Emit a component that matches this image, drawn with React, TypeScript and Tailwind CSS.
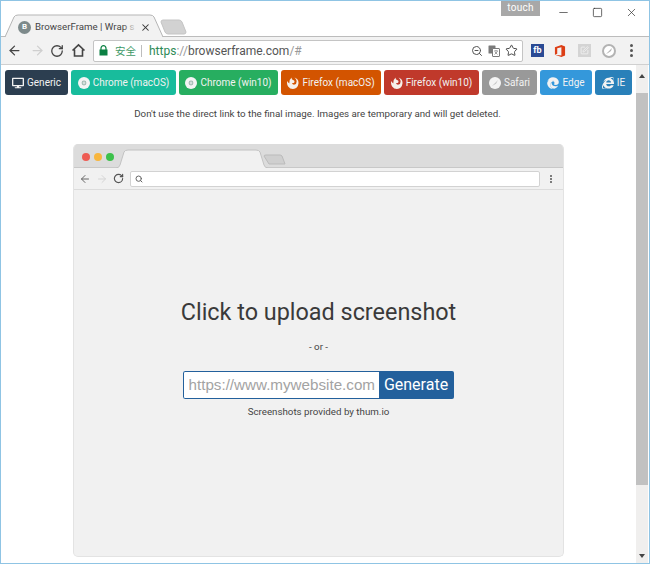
import React from "react";
import { FaDesktop, FaEdge, FaInternetExplorer } from "react-icons/fa";
import { ArrowLeft, ArrowRight, RotateCw, Search, ZoomOut, Star, X, Minus, Square, SquarePen } from "lucide-react";

function ChromeDisc({ size }: { size: number }) {
  return (
    <svg width={size} height={size} viewBox="0 0 12 12">
      <circle cx="6" cy="6" r="6" fill="#f4f4f4" />
      <circle cx="6" cy="6" r="2.4" fill="#9fb8b0" />
      <circle cx="6" cy="6" r="1.4" fill="#d5dfdc" />
    </svg>
  );
}

function FirefoxDisc({ size }: { size: number }) {
  return (
    <svg width={size} height={size} viewBox="0 0 12 12">
      <path d="M6 12 A6 6 0 0 1 0.4 4 Q1 6 2.4 6.4 Q2 3 4.6 0.6 Q4.4 2.6 6 3 Q8 3.4 7.4 5.2 Q6.6 6.4 5 6 Q5.6 8 7.6 7.6 Q9.8 7 9.6 4 Q9.4 2 7.6 0.4 A6 6 0 0 1 6 12 Z" fill="#f6f0ea" />
    </svg>
  );
}

function SafariDisc({ size }: { size: number }) {
  return (
    <svg width={size} height={size} viewBox="0 0 12 12">
      <circle cx="6" cy="6" r="6" fill="#f4f4f4" />
      <path d="M3 9 L6.6 5.4 L9 3 L7 6.8 Z" fill="#c4c4c4" />
    </svg>
  );
}

const buttons = [
  { label: "Generic", Icon: FaDesktop, cls: "bg-[#2c3e50] w-[63px]" },
  { label: "Chrome (macOS)", Icon: ChromeDisc, cls: "bg-[#18bc9c] w-[105px]" },
  { label: "Chrome (win10)", Icon: ChromeDisc, cls: "bg-[#27ae60] w-[99px]" },
  { label: "Firefox (macOS)", Icon: FirefoxDisc, cls: "bg-[#d35400] w-[100px]" },
  { label: "Firefox (win10)", Icon: FirefoxDisc, cls: "bg-[#c0392b] w-[95px]" },
  { label: "Safari", Icon: SafariDisc, cls: "bg-[#999999] w-[55px]" },
  { label: "Edge", Icon: FaEdge, cls: "bg-[#3498db] w-[52px]" },
  { label: "IE", Icon: FaInternetExplorer, cls: "bg-[#2980b9] w-[37px]" },
];

function Dots({ size, className }: { size: "big" | "small"; className: string }) {
  const dot = size === "big" ? "block size-[3px] rounded-full bg-[#555]" : "block size-[2px] rounded-full bg-[#555]";
  return (
    <div className={`flex flex-col ${className}`}>
      <span className={dot} />
      <span className={dot} />
      <span className={dot} />
    </div>
  );
}

export default function App() {
  return (
    <div className="w-[650px] h-[564px] overflow-hidden flex flex-col bg-white border border-[#8fc4e4] font-['Roboto',sans-serif] text-[#444]">
      {/* title bar */}
      <div className="relative h-[36px] shrink-0 flex items-start">
        <div className="absolute left-[-1px] right-0 bottom-0 h-px bg-[#bcbcbc]" />
        <svg className="absolute left-[0px] top-[13px]" width="190" height="24" viewBox="0 0 190 24">
          <path d="M4 23 L13 3 Q14 1 17 1 L149 1 Q152 1 153 3 L162 23" fill="#f2f2f2" stroke="#b5b5b5" />
          <path d="M160 8 Q160 6 162 6 L178 6 Q180 6 181 8 L185 18 Q185 20 183 20 L167 20 Q165 20 164 18 Z" fill="#d2d2d2" stroke="#c4c4c4" />
        </svg>
        <div className="relative ml-[17px] mt-[19px] w-[135px] h-[14px] flex items-center">
          <span className="size-[13px] rounded-full bg-[#7d8a8b] text-white text-[8px] font-bold flex items-center justify-center shrink-0">B</span>
          <span className="relative ml-[4px] h-[14px] w-[102px] overflow-hidden whitespace-nowrap text-[9.7px] leading-[14px] text-[#444]">
            BrowserFrame | Wrap s
            <span className="absolute right-0 top-0 bottom-0 w-[14px] bg-gradient-to-r from-transparent to-[#f2f2f2]" />
          </span>
          <X size={11} strokeWidth={2.2} className="ml-auto mr-[2px] text-[#333]" />
        </div>
        <div className="ml-auto flex items-start pr-[11px]">
          <div className="w-[39px] h-[15px] bg-[#a8a8a8] text-white text-[10px] leading-[14px] text-center tracking-[0.3px]">touch</div>
          <Minus size={13} strokeWidth={1.4} className="ml-[17px] mt-[5px] text-[#444]" />
          <Square size={11} strokeWidth={1.6} className="ml-[22px] mt-[6px] text-[#333]" />
          <X size={13} strokeWidth={1.3} className="ml-[22px] mt-[5px] text-[#333]" />
        </div>
      </div>

      {/* toolbar */}
      <div className="h-[28px] shrink-0 bg-[#f2f2f2] border-b border-[#d0d0d0] flex items-center">
        <ArrowLeft size={15} strokeWidth={2} className="ml-[6px] text-[#444]" />
        <ArrowRight size={15} strokeWidth={2} className="ml-[8px] text-[#cfcfcf]" />
        <RotateCw size={14} strokeWidth={2.2} className="ml-[5px] text-[#444]" />
        <svg className="ml-[7px]" width="15" height="15" viewBox="0 0 15 15">
          <path d="M1.5 7.5 L7.5 1.8 L13.5 7.5 M3.5 6.5 V13 H11.5 V6.5" fill="none" stroke="#444" strokeWidth="1.6" />
        </svg>
        <div className="ml-[7px] w-[430px] h-[22px] bg-white border border-[#c4c4c4] rounded-[2px] flex items-center pl-[5px] pr-[4px]">
          <svg width="9" height="11" viewBox="0 0 9 11">
            <path d="M2 5 V3.2 a2.5 2.5 0 0 1 5 0 V5" fill="none" stroke="#0b8043" strokeWidth="1.2" />
            <rect x="0.5" y="4.5" width="8" height="6" fill="#0b8043" />
          </svg>
          <span className="ml-[7px] text-[10.5px] text-[#3f9a68] font-['Noto_Sans_CJK_SC',sans-serif]">安全</span>
          <span className="ml-[5px] w-px h-[12px] bg-[#bdbdbd]" />
          <span className="ml-[7px] text-[12px] text-[#555]"><span className="text-[#2e8b57]">https</span><span className="text-[#999]">://</span>browserframe.com<span className="text-[#999]">/#</span></span>
          <ZoomOut size={12} className="ml-auto text-[#555]" />
          <svg className="ml-[5px]" width="12" height="12" viewBox="0 0 12 12">
            <rect x="0.5" y="0.5" width="7" height="8" rx="0.5" fill="#7a7a7a" />
            <rect x="4.5" y="3.5" width="7" height="8" rx="0.5" fill="#fff" stroke="#7a7a7a" />
            <path d="M6 6 H10 M8 5 V6 M6.5 9.5 L9.5 6.5 M7 7 L9.5 9.5" stroke="#7a7a7a" strokeWidth="0.7" fill="none" />
          </svg>
          <Star size={13} strokeWidth={1.8} className="ml-[5px] text-[#444]" />
        </div>
        <span className="ml-[8px] size-[13px] bg-[#2a4a94] text-white text-[9px] font-bold leading-[13px] text-center">fb</span>
        <svg className="ml-[10px]" width="12" height="14" viewBox="0 0 13 14">
          <path d="M1 3 L8 0.5 L12 2 V12 L8 13.5 L1 11 L8 12 V3 L3.5 4 V10 L1 11 Z" fill="#dc3e15" />
        </svg>
        <div className="ml-[12px] size-[13px] bg-[#d4d4d4] flex items-center justify-center">
          <SquarePen size={9} className="text-[#f5f5f5]" />
        </div>
        <svg className="ml-[11px]" width="14" height="14" viewBox="0 0 14 14">
          <circle cx="7" cy="7" r="6" fill="#fff" stroke="#b3b3b3" strokeWidth="2" />
          <path d="M4 10 L8 6 L10 4 L9 7 L6 9 Z" fill="#b3b3b3" />
        </svg>
        <Dots size="big" className="ml-[14px] gap-[2px]" />
      </div>

      {/* page */}
      <div className="flex-1 min-h-0 flex">
        <div className="flex-1 min-w-0 flex flex-col">
          <div className="flex gap-[3px] pl-[4px] pt-[5px]">
            {buttons.map(({ label, Icon, cls }) => (
              <div key={label} className={`h-[25px] shrink-0 rounded-[3px] flex items-center justify-center gap-[3px] text-[#f2f2f2] text-[10px] leading-[14px] pt-[1px] whitespace-nowrap ${cls}`}>
                <Icon size={12} />
                <span>{label}</span>
              </div>
            ))}
          </div>
          <p className="mt-[12px] text-center text-[9.75px] leading-[14px] text-[#444] pr-[2px]">
            Don't use the direct link to the final image. Images are temporary and will get deleted.
          </p>

          {/* mock browser */}
          <div className="ml-[72px] mt-[23px] w-[491px] h-[413px] rounded-[5px] bg-[#f1f1f1] border border-[#e3e3e3] border-t-0 flex flex-col overflow-hidden">
            <div className="relative h-[24px] shrink-0 bg-[#dcdcdc] border-b border-[#c8c8c8]">
              <svg className="absolute left-[42px] top-[5px]" width="190" height="19" viewBox="0 0 190 19">
                <path d="M0 19 Q3 19 4 16 L8 3 Q9 1 12 1 L140 1 Q143 1 144 3 L148 16 Q149 19 152 19" fill="#f1f1f1" stroke="#c2c2c2" />
                <path d="M148 7 Q148 6 150 6 L164 6 Q165 6 166 7 L169 15 L153 15 Z" fill="#cfcfcf" stroke="#bbbbbb" />
              </svg>
              <div className="absolute left-[8px] top-[9px] flex gap-[4px]">
                <span className="size-[8px] rounded-full bg-[#ee5c54]" />
                <span className="size-[8px] rounded-full bg-[#f8b63e]" />
                <span className="size-[8px] rounded-full bg-[#3cc14b]" />
              </div>
            </div>
            <div className="h-[22px] shrink-0 border-b border-[#dcdcdc] flex items-center">
              <ArrowLeft size={12} strokeWidth={2} className="ml-[5px] text-[#666]" />
              <ArrowRight size={12} strokeWidth={2} className="ml-[5px] text-[#d5d5d5]" />
              <RotateCw size={11} strokeWidth={2.6} className="ml-[5px] text-[#555]" />
              <div className="ml-[6px] w-[410px] h-[16px] bg-white border border-[#d2d2d2] rounded-[2px] flex items-center pl-[4px]">
                <Search size={8} strokeWidth={3} className="text-[#666]" />
              </div>
              <Dots size="small" className="ml-[10px] gap-px" />
            </div>
            <div className="flex-1 flex flex-col items-center pt-[107px]">
              <h1 className="text-[23.4px] leading-[30px] text-[#3a3a3a]">Click to upload screenshot</h1>
              <div className="mt-[13px] text-[9.75px] leading-[14px] text-[#444]">- or -</div>
              <div className="mt-[17px] mr-[1px] flex h-[28px] w-[271px] rounded-[2px] overflow-hidden">
                <div className="flex-1 min-w-0 bg-white border border-[#23609c] border-r-0 rounded-l-[2px] pl-[5px] pr-[3px]">
                  <div className="text-[15.2px] leading-[26px] text-[#a3a3a3] font-['Liberation_Sans',sans-serif] whitespace-nowrap overflow-hidden">https://www.mywebsite.com</div>
                </div>
                <div className="w-[75px] shrink-0 bg-[#23609c] text-white text-[16px] leading-[28px] text-center">Generate</div>
              </div>
              <div className="mt-[6px] text-[9.75px] leading-[14px] text-[#444]">Screenshots provided by thum.io</div>
            </div>
          </div>
        </div>

        {/* scrollbar */}
        <div className="w-[12px] shrink-0 mr-px bg-[#f0efee] flex flex-col items-center">
          <div className="h-[20px] shrink-0 flex items-center justify-center pt-[2px]">
            <span className="w-0 h-0 border-x-[3px] border-x-transparent border-b-[4px] border-b-[#444]" />
          </div>
          <div className="w-full h-[392px] bg-[#c1c1c1] shrink-0 mt-[8px]" />
          <div className="mt-auto h-[15px] flex items-center justify-center">
            <span className="w-0 h-0 border-x-[3px] border-x-transparent border-t-[4px] border-t-[#444]" />
          </div>
        </div>
      </div>
    </div>
  );
}
